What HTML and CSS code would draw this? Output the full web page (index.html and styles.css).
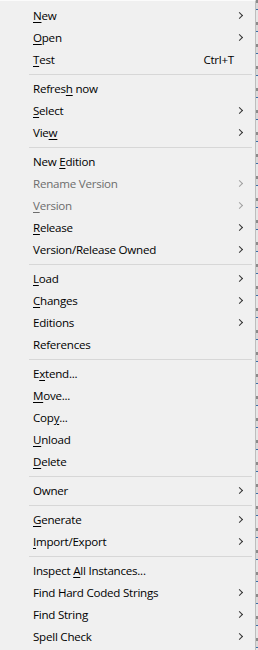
FILE: index.html
```html
<!DOCTYPE html>
<html lang="en">
<head>
    <meta charset="UTF-8">
    <title>Context menu</title>
    <link rel="stylesheet" href="styles.css">
</head>
<body>
    <div class="screen">
        <div class="menu">
            <div class="item sub"><span class="label"><u>N</u>ew</span></div>
            <div class="item sub"><span class="label"><u>O</u>pen</span></div>
            <div class="item"><span class="label"><u>T</u>est</span><span class="key">Ctrl+T</span></div>
            <div class="sep"></div>
            <div class="item"><span class="label">Refres<u>h</u> now</span></div>
            <div class="item sub"><span class="label"><u>S</u>elect</span></div>
            <div class="item sub"><span class="label">Vie<u>w</u></span></div>
            <div class="sep"></div>
            <div class="item"><span class="label">New <u>E</u>dition</span></div>
            <div class="item sub disabled"><span class="label">Rename Version</span></div>
            <div class="item sub disabled"><span class="label"><u>V</u>ersion</span></div>
            <div class="item sub"><span class="label"><u>R</u>elease</span></div>
            <div class="item sub"><span class="label">Version/Release Owned</span></div>
            <div class="sep"></div>
            <div class="item sub"><span class="label"><u>L</u>oad</span></div>
            <div class="item sub"><span class="label"><u>C</u>hanges</span></div>
            <div class="item sub"><span class="label">Editions</span></div>
            <div class="item"><span class="label">References</span></div>
            <div class="sep"></div>
            <div class="item"><span class="label">E<u>x</u>tend...</span></div>
            <div class="item"><span class="label"><u>M</u>ove...</span></div>
            <div class="item"><span class="label">Cop<u>y</u>...</span></div>
            <div class="item"><span class="label"><u>U</u>nload</span></div>
            <div class="item"><span class="label"><u>D</u>elete</span></div>
            <div class="sep"></div>
            <div class="item sub"><span class="label">Owner</span></div>
            <div class="sep"></div>
            <div class="item sub"><span class="label"><u>G</u>enerate</span></div>
            <div class="item sub"><span class="label"><u>I</u>mport/Export</span></div>
            <div class="sep"></div>
            <div class="item"><span class="label">Inspect <u>A</u>ll Instances...</span></div>
            <div class="item sub"><span class="label">Find Hard Coded Strings</span></div>
            <div class="item sub"><span class="label">Find String</span></div>
            <div class="item sub"><span class="label">Spell Check</span></div>
        </div>
        <div class="behind"></div>
    </div>
</body>
</html>
```

FILE: styles.css
```css
html, body {
    margin: 0;
    padding: 0;
    background: #f0f0f0;
}
body {
    font-family: "Open Sans", "Noto Sans", sans-serif;
    font-size: 11.6px;
    letter-spacing: -0.25px;
    color: #000;
}
.screen {
    display: flex;
    width: 258px;
    height: 650px;
    overflow: hidden;
}
.menu {
    width: 256px;
    flex: none;
    background: #f0f0f0;
    border-top: 1px solid #fbfbfb;
    border-right: 1px solid #bdbdbd;
    padding-top: 4px;
    box-sizing: border-box;
}
.behind {
    flex: 1;
    background: repeating-linear-gradient(#8a8a8a 0 3px, #d8d8d8 3px 9px, #3a6ea5 9px 10px, #e6e6e6 10px 22px);
}
.item {
    display: flex;
    align-items: center;
    box-sizing: border-box;
    height: 22px;
    padding: 0 21px 1px 33px;
    position: relative;
    white-space: nowrap;
}
.item u {
    text-decoration-thickness: 1px;
    text-underline-offset: 2px;
}
.label {
    flex: 1;
}
.sub::after {
    content: "";
    position: absolute;
    left: 237px;
    top: 8px;
    width: 4px;
    height: 4px;
    border-right: 1px solid #333;
    border-bottom: 1px solid #333;
    transform: rotate(-45deg);
}
.disabled {
    color: #6d6d6d;
}
.disabled::after {
    border-color: #a0a0a0;
}
.sep {
    height: 1px;
    margin: 3px 3px 3px 29px;
    background: #d7d7d7;
}
```
